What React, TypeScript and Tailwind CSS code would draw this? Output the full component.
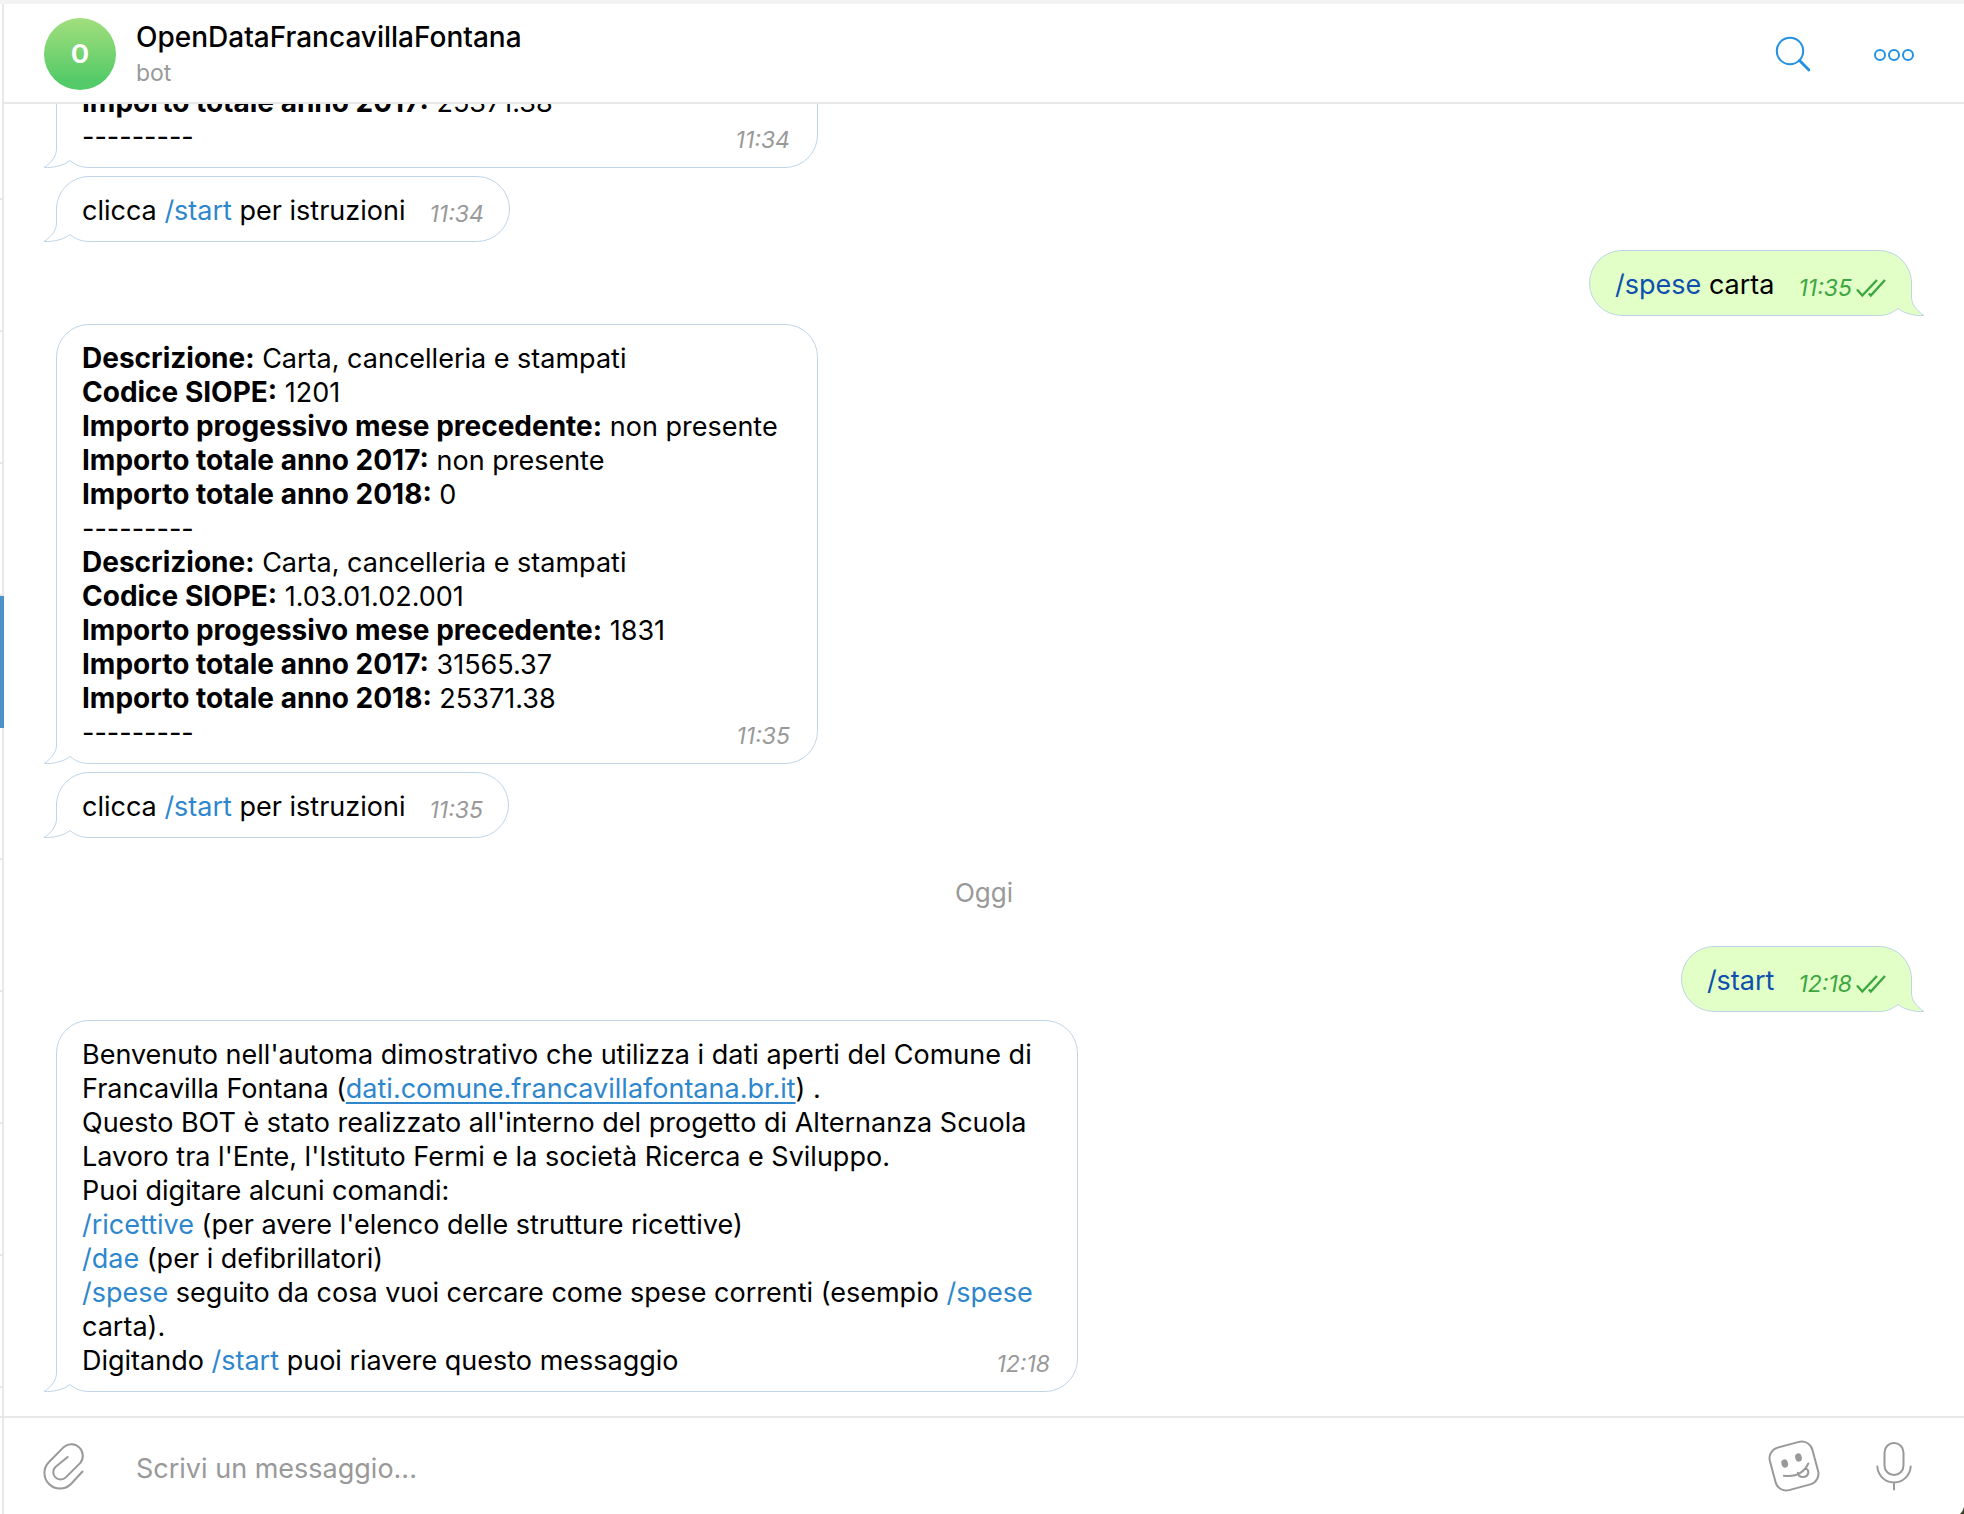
import type { ReactNode } from "react";

function Cmd({ children, dark }: { children: string; dark?: boolean }) {
  return (
    <a href="#" className={dark ? "text-[#0f4fae]" : "text-[#2e87cc]"}>
      {children}
    </a>
  );
}

function Tail({ out }: { out?: boolean }) {
  return (
    <svg
      aria-hidden="true"
      width="48"
      height="36"
      viewBox="0 0 48 36"
      className={
        out
          ? "absolute -bottom-px -right-[15px] -scale-x-100"
          : "absolute -bottom-px -left-[15px]"
      }
    >
      <rect width="48" height="36" fill="#fff" />
      <path
        d="M14.5 0V17C14.5 24.5 9 31 2 35.5C11 35.8 21 34 28 28.5C34 33.5 40 35.5 48 35.5V0Z"
        fill={out ? "#e1ffc7" : "#fff"}
      />
      <path
        d="M14.5 0V17C14.5 24.5 9 31 2 35.5C11 35.8 21 34 28 28.5C34 33.5 40 35.5 48 35.5"
        fill="none"
        stroke="#bfd5e7"
      />
    </svg>
  );
}

function Time({ children, out }: { children: string; out?: boolean }) {
  return (
    <span
      className={`relative flex items-center gap-1 self-end justify-self-end text-[23px] leading-7 italic ${
        out ? "text-[#3da641]" : "text-[#999999]"
      }`}
    >
      <time>{children}</time>
      {out && (
        <svg aria-label="Letto" width="30" height="20" viewBox="0 0 30 20" fill="none" stroke="currentColor" strokeWidth="2.4">
          <path d="M1 11.5L6.3 17.5L21 2M12.8 15.5L14.8 17.5L29 2" />
        </svg>
      )}
    </span>
  );
}

function Bubble({ children, time, out }: { children: ReactNode; time: string; out?: boolean }) {
  return (
    <article
      className={`relative flex items-end gap-6 rounded-[33px] border border-[#bfd5e7] px-[25px] pt-[17px] pb-[13px] ${
        out ? "self-end bg-[#e1ffc7]" : "self-start bg-white"
      }`}
    >
      <Tail out={out} />
      <p className="relative">{children}</p>
      <Time out={out}>{time}</Time>
    </article>
  );
}

function BlockBubble({ children, time, width }: { children: ReactNode; time: string; width: string }) {
  return (
    <article
      className={`relative grid max-w-full self-start rounded-[33px] border border-[#bfd5e7] bg-white pt-[17px] pr-[27px] pb-[13px] pl-[25px] ${width}`}
    >
      <Tail />
      <div className="relative [grid-area:1/1]">{children}</div>
      <div className="grid [grid-area:1/1]">
        <Time>{time}</Time>
      </div>
    </article>
  );
}

function Field({ label, value }: { label: string; value: string }) {
  return (
    <p>
      <b className="text-[28px] leading-none font-bold">{label}:</b> {value}
    </p>
  );
}

const RECORDS = [
  [
    ["Descrizione", "Carta, cancelleria e stampati"],
    ["Codice SIOPE", "1201"],
    ["Importo progessivo mese precedente", "non presente"],
    ["Importo totale anno 2017", "non presente"],
    ["Importo totale anno 2018", "0"],
  ],
  [
    ["Descrizione", "Carta, cancelleria e stampati"],
    ["Codice SIOPE", "1.03.01.02.001"],
    ["Importo progessivo mese precedente", "1831"],
    ["Importo totale anno 2017", "31565.37"],
    ["Importo totale anno 2018", "25371.38"],
  ],
];

function ChatListEdge() {
  return (
    <aside className="flex w-1 shrink-0 flex-col overflow-hidden">
      <div className="h-16 shrink-0 border-r-2 border-[#e8e8e8]" />
      {Array.from({ length: 10 }, (_, i) => (
        <div
          key={i}
          className={
            i === 4
              ? "h-[132px] shrink-0 bg-[#4c91c7]"
              : "h-[132px] shrink-0 border-r-2 border-b-2 border-[#e8e8e8]"
          }
        />
      ))}
      <div className="h-[30px] shrink-0 border-r-2 border-b-2 border-[#e8e8e8]" />
      <div className="flex-1 border-r-2 border-[#e8e8e8]" />
    </aside>
  );
}

export default function App() {
  return (
    <div className="relative flex h-screen flex-col overflow-hidden border-t-4 border-[#f3f3f3] bg-white font-[Inter,'Liberation_Sans',sans-serif] text-[27px] leading-[34px] text-black">
      <div className="flex min-h-0 flex-1">
        <ChatListEdge />
        <main className="flex min-w-0 flex-1 flex-col">
          <header className="flex h-[100px] shrink-0 items-center gap-5 border-b-2 border-[#e8e8e8] pt-0.5 pr-[50px] pl-10">
            <div className="flex size-[72px] items-center justify-center rounded-full bg-linear-to-b from-[#a0de7e] to-[#54cb68] to-85% font-[Roboto,sans-serif] text-[26px] font-bold text-white">
              O
            </div>
            <div className="flex-1 pt-0.5">
              <h1 className="text-[28px] leading-9 font-medium">OpenDataFrancavillaFontana</h1>
              <p className="text-[23px] leading-9 text-[#999999]">bot</p>
            </div>
            <div className="flex items-center gap-[62px]">
              <button aria-label="Cerca">
                <svg width="38" height="38" viewBox="0 0 38 38" fill="none" stroke="#2491e2" className="block">
                  <circle cx="18" cy="16" r="13.2" strokeWidth="2" />
                  <path d="M27.5 25.5L37 35" strokeWidth="3" strokeLinecap="round" />
                </svg>
              </button>
              <button aria-label="Altro">
                <svg width="42" height="14" viewBox="0 0 42 14" fill="none" stroke="#2491e2" strokeWidth="2" className="mt-0.5 block">
                  <circle cx="8" cy="7" r="5" />
                  <circle cx="22" cy="7" r="5" />
                  <circle cx="36" cy="7" r="5" />
                </svg>
              </button>
            </div>
          </header>

          <section className="flex min-h-0 flex-1 flex-col justify-end gap-2 overflow-hidden px-[52px] pb-6">
            <BlockBubble time="11:34" width="w-[762px]">
              <Field label="Importo totale anno 2017" value="25371.38" />
              <p>---------</p>
            </BlockBubble>
            <Bubble time="11:34">
              clicca <Cmd>/start</Cmd> per istruzioni
            </Bubble>
            <Bubble time="11:35" out>
              <Cmd dark>/spese</Cmd> carta
            </Bubble>
            <BlockBubble time="11:35" width="w-[762px]">
              {RECORDS.map((fields, i) => (
                <div key={i}>
                  {fields.map(([label, value]) => (
                    <Field key={label} label={label} value={value} />
                  ))}
                  <p>---------</p>
                </div>
              ))}
            </BlockBubble>
            <Bubble time="11:35">
              clicca <Cmd>/start</Cmd> per istruzioni
            </Bubble>
            <p className="pt-[30px] pb-7 text-center text-[26px] text-[#999999]">Oggi</p>
            <Bubble time="12:18" out>
              <Cmd dark>/start</Cmd>
            </Bubble>
            <BlockBubble time="12:18" width="w-[1022px]">
              <p>
                Benvenuto nell'automa dimostrativo che utilizza i dati aperti del Comune di Francavilla Fontana (
                <a href="#" className="text-[#2e87cc] underline decoration-2 underline-offset-4">
                  dati.comune.francavillafontana.br.it
                </a>
                ) .
              </p>
              <p>
                Questo BOT è stato realizzato all'interno del progetto di Alternanza Scuola Lavoro tra l'Ente,
                l'Istituto Fermi e la società Ricerca e Sviluppo.
              </p>
              <p>Puoi digitare alcuni comandi:</p>
              <p>
                <Cmd>/ricettive</Cmd> (per avere l'elenco delle strutture ricettive)
              </p>
              <p>
                <Cmd>/dae</Cmd> (per i defibrillatori)
              </p>
              <p>
                <Cmd>/spese</Cmd> seguito da cosa vuoi cercare come spese correnti (esempio <Cmd>/spese</Cmd> carta).
              </p>
              <p>
                Digitando <Cmd>/start</Cmd> puoi riavere questo messaggio
              </p>
            </BlockBubble>
          </section>

          <footer className="flex h-[98px] shrink-0 items-center border-t-2 border-[#e8e8e8] pr-[50px] pl-[38px] text-[#999999]">
            <button aria-label="Allega file">
              <svg width="44" height="50" viewBox="0 0 44 50" fill="none" stroke="currentColor" strokeWidth="2" strokeLinecap="round" className="block">
                <path d="M40.5 30.5L29 43A15.5 15.5 0 0 1 7 21L21.9 5.9A11.5 11.5 0 0 1 38.1 22.1L23.8 36.4A7.3 7.3 0 0 1 13.4 26L25.7 16" />
              </svg>
            </button>
            <input
              aria-label="Messaggio"
              placeholder="Scrivi un messaggio..."
              className="ml-[50px] min-w-0 flex-1 pt-1.5 text-black outline-none placeholder:text-[#999999]"
            />
            <div className="flex items-center gap-[54px]">
              <button aria-label="Adesivi">
                <svg width="52" height="52" viewBox="0 0 52 52" fill="none" stroke="currentColor" strokeWidth="2" strokeLinecap="round" className="block">
                  <rect x="4" y="4" width="44" height="44" rx="11" transform="rotate(-15 26 26)" />
                  <ellipse cx="16.7" cy="23.5" rx="3.3" ry="4.2" transform="rotate(-15 16.7 23.5)" fill="currentColor" stroke="none" />
                  <ellipse cx="30.5" cy="17.5" rx="3.3" ry="4.2" transform="rotate(-15 30.5 17.5)" fill="currentColor" stroke="none" />
                  <path d="M15.8 35.7C26 37 35.5 33.5 40.3 23.5M29.8 32.7C30.5 38.5 39.5 38.5 40.3 32.5C40.5 30.5 39.3 29 37.7 28.3" />
                </svg>
              </button>
              <button aria-label="Messaggio vocale">
                <svg width="40" height="52" viewBox="0 0 40 52" fill="none" stroke="currentColor" strokeWidth="2" strokeLinecap="round" className="block">
                  <rect x="10.5" y="3" width="19" height="32" rx="9.5" />
                  <path d="M3.3 26.5C4 35.500 11 42.5 20 42.5S36 35.500 36.7 26.5M20 42.5V49.5" />
                </svg>
              </button>
            </div>
          </footer>
        </main>
      </div>
      <svg aria-hidden="true" width="4" height="7" viewBox="0 0 4 7" className="absolute right-0 bottom-0">
        <path d="M4 0V7H0Q3 4 4 0Z" fill="#3f4430" />
      </svg>
    </div>
  );
}
